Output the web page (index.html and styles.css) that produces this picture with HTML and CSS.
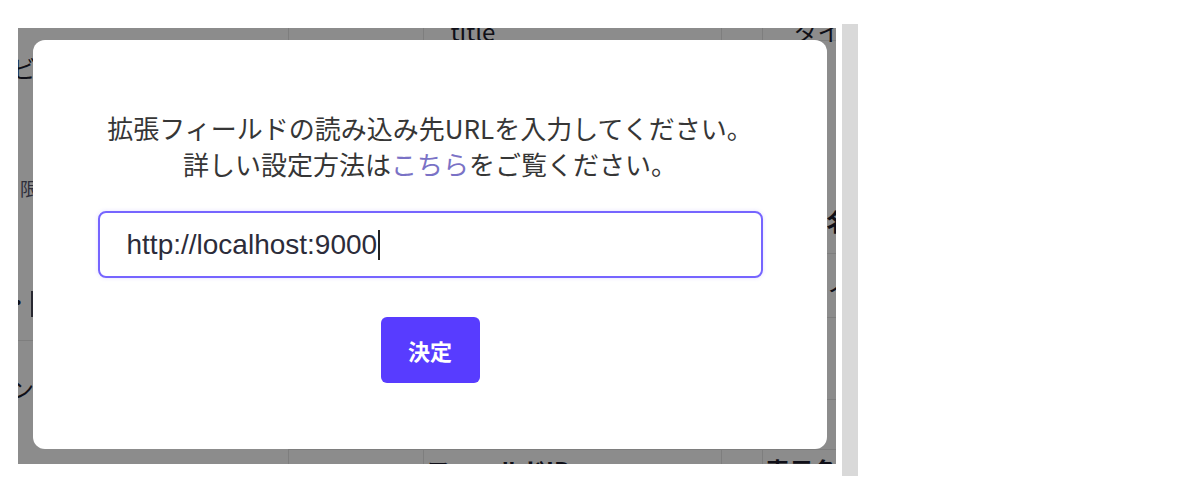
FILE: index.html
```html
<!DOCTYPE html>
<html lang="ja">
<head>
    <meta charset="UTF-8">
    <meta name="viewport" content="width=device-width, initial-scale=1.0">
    <title>拡張フィールド</title>
    <link rel="stylesheet" href="styles.css">
</head>
<body>
    <div class="page">
        <div class="stage">
            <table class="fields">
                <tr class="row-head">
                    <td></td><td></td><td class="pad">title</td><td></td><td class="pad-r">タイトル</td>
                </tr>
                <tr class="row-a">
                    <td><div class="frag f-bi">ビ</div><div class="frag f-gen">限</div></td>
                    <td></td><td></td><td></td>
                    <td><div class="frag f-na">名</div></td>
                </tr>
                <tr class="row-b">
                    <td><div class="frag f-dot">・</div><span class="bar"></span></td>
                    <td></td><td></td><td></td>
                    <td><div class="frag f-no">ノ</div></td>
                </tr>
                <tr class="row-c">
                    <td class="line"></td>
                    <td class="nb"></td><td class="nb"></td><td class="nb"></td><td class="nb"></td>
                </tr>
                <tr class="row-d">
                    <td><div class="frag f-n">ン</div></td>
                    <td></td><td></td><td></td><td></td>
                </tr>
                <tr class="row-e">
                    <td></td><td></td><td></td><td></td><td></td>
                </tr>
                <tr class="row-foot">
                    <td></td><td></td><td class="pad-s">フィールドID</td><td></td><td class="pad-s">表示名</td>
                </tr>
            </table>

            <div class="overlay">
                <div class="modal">
                    <p class="lead">
                        拡張フィールドの読み込み先URLを入力してください。<br>
                        詳しい設定方法は<a href="#">こちら</a>をご覧ください。
                    </p>
                    <div class="field">
                        <span class="value">http://localhost:9000</span><span class="caret"></span>
                    </div>
                    <button class="submit">決定</button>
                </div>
            </div>
        </div>
        <div class="scrollbar"></div>
    </div>
</body>
</html>
```

FILE: styles.css
```css
body {
    margin: 0;
    background-color: #fff;
    font-family: "Noto Sans CJK JP", "Liberation Sans", sans-serif;
    color: #333;
}
.page {
    display: flex;
    align-items: flex-start;
    gap: 6px;
    padding-left: 18px;
}
.stage {
    position: relative;
    margin-top: 28px;
    width: 818px;
    height: 436px;
    overflow: hidden;
    background-color: #fff;
}
.scrollbar {
    margin-top: 24px;
    width: 16px;
    height: 452px;
    background-color: #d9d9d9;
}

/* table behind the dialog */
.fields {
    margin-top: -28px;
    width: 818px;
    table-layout: fixed;
    border-collapse: collapse;
    font-size: 24px;
    color: #1c1c2c;
}
.fields td {
    box-sizing: border-box;
    padding: 0;
    border-right: 1px solid #e6e6e6;
    border-bottom: 1px solid #e6e6e6;
    vertical-align: top;
}
.fields td:first-child {
    border-bottom: none;
}
.fields td.line {
    border-bottom: 1px solid #e6e6e6;
}
.fields td.nb {
    border-bottom: none;
}
.fields td:last-child {
    border-right: none;
}
.fields td:nth-child(1) { width: 270px; }
.fields td:nth-child(2) { width: 135px; }
.fields td:nth-child(3) { width: 298px; }
.fields td:nth-child(4) { width: 41px; }
.row-head { height: 40px; }
.row-head td {
    vertical-align: bottom;
    line-height: 18px;
}
.row-a { height: 213px; }
.row-b { height: 64px; }
.row-c { height: 23px; }
.row-d { height: 54px; }
.row-e { height: 50px; }
.row-foot { height: 50px; }
.row-foot td {
    font-weight: bold;
    padding-top: 2px;
}
.pad { padding-left: 27px !important; }
.pad-r { padding-left: 31px !important; white-space: nowrap; }
.pad-s { padding-left: 3px !important; white-space: nowrap; }
.frag {
    line-height: 24px;
    white-space: nowrap;
}
.f-bi { margin: 16px 0 0 -6px; }
.f-gen { margin: 96px 0 0 2px; font-size: 18px; color: #55556a; }
.f-dot { margin: 36px 0 0 -12px; }
.bar {
    display: block;
    width: 2px;
    height: 26px;
    margin: -22px 0 0 13px;
    background-color: #4a4a5a;
}
.f-n { margin: 35px 0 0 -8px; }
.f-na { margin: 168px 0 0 64px; font-weight: bold; }
.f-no { margin: 16px 0 0 64px; }

/* dialog */
.overlay {
    position: absolute;
    inset: 0;
    padding: 12px 0 0 15px;
    background-color: rgba(0, 0, 0, 0.45);
}
.modal {
    width: 794px;
    box-sizing: border-box;
    padding: 70px 64px 66px;
    background-color: #fff;
    border-radius: 12px;
    display: flex;
    flex-direction: column;
    align-items: center;
}
.lead {
    margin: 0;
    font-size: 26px;
    line-height: 36px;
    text-align: center;
    color: #363636;
}
.lead a {
    color: #7a72c6;
    text-decoration: none;
}
.field {
    margin-top: 29px;
    width: 665px;
    height: 67px;
    box-sizing: border-box;
    border: 2px solid #7665ff;
    border-radius: 8px;
    box-shadow: 0 0 4px rgba(118, 101, 255, 0.2);
    padding-left: 27px;
    display: flex;
    align-items: center;
    font-family: "Liberation Sans", sans-serif;
    font-size: 28px;
    color: #2c2c3a;
}
.caret {
    width: 2px;
    height: 30px;
    margin-left: 1px;
    background-color: #222;
}
.submit {
    margin-top: 39px;
    width: 99px;
    height: 66px;
    border: none;
    border-radius: 6px;
    background-color: #583cff;
    color: #fff;
    font-family: "Noto Sans CJK JP", sans-serif;
    font-size: 22px;
    font-weight: bold;
}
```
